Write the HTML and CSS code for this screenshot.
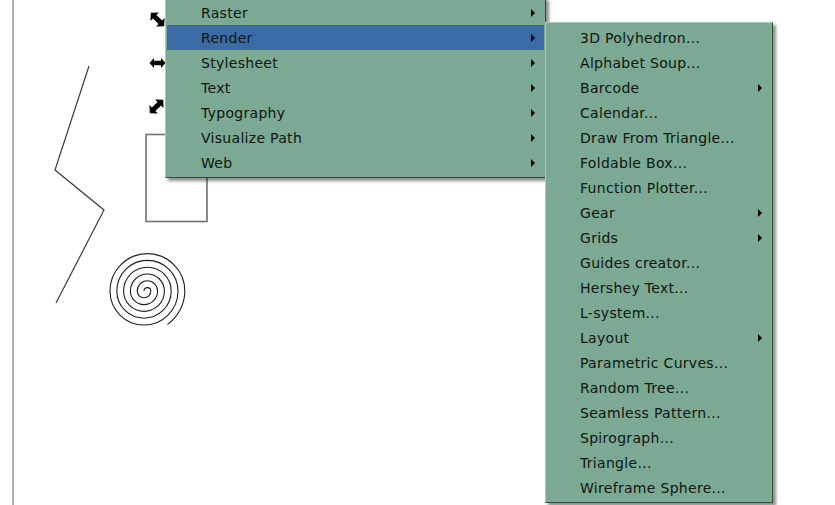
FILE: index.html
```html
<!DOCTYPE html>
<html lang="en">
<head>
  <meta charset="UTF-8" />
  <title>Extensions menu</title>
  <link rel="stylesheet" href="styles.css">
</head>
<body>
  <div class="stage">
    <svg class="drawing" width="835" height="505" viewBox="0 0 835 505">
      <line x1="13" y1="0" x2="13" y2="505" stroke="#7d7d7d" stroke-width="1.2"/>
      <polyline points="89,66 55,170 104,210 56,303" fill="none" stroke="#3a3a3a" stroke-width="1.2"/>
      <rect x="146" y="134.5" width="61" height="87" fill="none" stroke="#707070" stroke-width="1.6"/>
      <path d="M144,291 A3.4,3.4 0 0 1 150.8,291 A6.8,6.8 0 0 1 137.2,291 A10.2,10.2 0 0 1 157.6,291 A13.6,13.6 0 0 1 130.4,291 A17,17 0 0 1 164.4,291 A20.4,20.4 0 0 1 123.6,291 A23.8,23.8 0 0 1 171.2,291 A27.2,27.2 0 0 1 116.8,291 A30.6,30.6 0 0 1 178,291 A34,34 0 0 1 110,291 A37.4,37.4 0 0 1 184.8,291 A40.8,40.8 0 0 1 167.4,324.4" fill="none" stroke="#1e1e1e" stroke-width="1.1"/>
      <!-- selection handles -->
      <g fill="#000">
        <polygon transform="translate(157.5,19.5) rotate(45)" points="-9.5,0 -4,-6 -4,-2.5 4,-2.5 4,-6 9.5,0 4,6 4,2.5 -4,2.5 -4,6"/>
        <polygon transform="translate(157.5,63)" points="-8,0 -3.5,-5 -3.5,-2.2 3.5,-2.2 3.5,-5 8,0 3.5,5 3.5,2.2 -3.5,2.2 -3.5,5"/>
        <polygon transform="translate(156.5,106.5) rotate(-45)" points="-9.5,0 -4,-6 -4,-2.5 4,-2.5 4,-6 9.5,0 4,6 4,2.5 -4,2.5 -4,6"/>
      </g>
    </svg>

    <ul class="menu menu-main">
      <li class="sub">Raster<span class="arrow"></span></li>
      <li class="sub active">Render<span class="arrow"></span></li>
      <li class="sub">Stylesheet<span class="arrow"></span></li>
      <li class="sub">Text<span class="arrow"></span></li>
      <li class="sub">Typography<span class="arrow"></span></li>
      <li class="sub">Visualize Path<span class="arrow"></span></li>
      <li class="sub">Web<span class="arrow"></span></li>
    </ul>

    <ul class="menu menu-render">
      <li>3D Polyhedron...</li>
      <li>Alphabet Soup...</li>
      <li class="sub">Barcode<span class="arrow"></span></li>
      <li>Calendar...</li>
      <li>Draw From Triangle...</li>
      <li>Foldable Box...</li>
      <li>Function Plotter...</li>
      <li class="sub">Gear<span class="arrow"></span></li>
      <li class="sub">Grids<span class="arrow"></span></li>
      <li>Guides creator...</li>
      <li>Hershey Text...</li>
      <li>L-system...</li>
      <li class="sub">Layout<span class="arrow"></span></li>
      <li>Parametric Curves...</li>
      <li>Random Tree...</li>
      <li>Seamless Pattern...</li>
      <li>Spirograph...</li>
      <li>Triangle...</li>
      <li>Wireframe Sphere...</li>
    </ul>
  </div>
</body>
</html>
```

FILE: styles.css
```css
body {
  margin: 0;
  padding: 0;
  background: #fff;
  overflow: hidden;
}

.stage {
  position: relative;
  width: 835px;
  height: 505px;
  overflow: hidden;
}

.drawing {
  position: absolute;
  top: 0; left: 0;
}

.menu {
  position: absolute;
  margin: 0;
  padding: 2px 1px;
  list-style: none;
  background: #7ba993;
  border: 1px solid;
  border-color: #a8cbb7 #33503f #33503f #a8cbb7;
  box-shadow: 3px 3px 3px rgba(0, 0, 0, 0.45);
  font-family: "DejaVu Sans", sans-serif;
  font-size: 14px;
  letter-spacing: 0.3px;
  color: #0f1511;
}

.menu li {
  display: flex;
  align-items: center;
  justify-content: space-between;
  height: 25px;
  padding: 0 9px 0 34px;
}

.menu-main {
  left: 165px;
  top: -3px;
  width: 377px;
}

.menu-render {
  left: 545px;
  top: 22px;
  width: 224px;
}

.menu-render li {
  padding-left: 33px;
}

.menu li.active {
  background: #3b6ba5;
}

.arrow {
  width: 0;
  height: 0;
  border-left: 4px solid #000;
  border-top: 4px solid transparent;
  border-bottom: 4px solid transparent;
}
```
